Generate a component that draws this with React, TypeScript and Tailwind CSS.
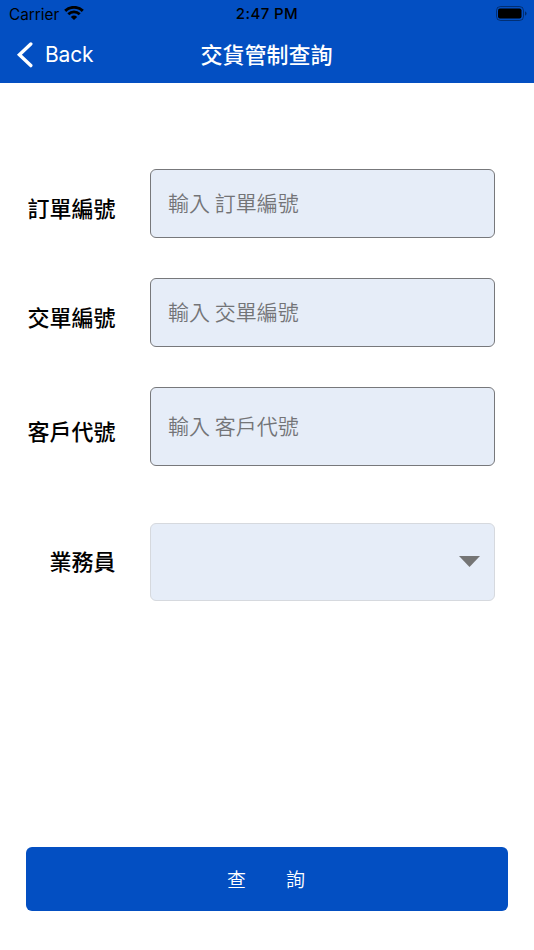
const fields = [
  { label: "訂單編號", row: "mb-10 h-[69px]", labelPos: "pt-[7px]" },
  { label: "交單編號", row: "mb-10 h-[69px]", labelPos: "pt-[7px]" },
  { label: "客戶代號", row: "mb-[57px] h-[79px]", labelPos: "pt-[7px]" },
];

const StatusBar = () => {
  return (
    <div className="flex h-7 items-center justify-between pl-[9px] pr-[7px] font-['Inter','Liberation_Sans',sans-serif] text-black">
      <div className="flex w-[120px] items-center gap-[5px]">
        <span className="pt-px text-[15.3px] leading-[27px]">Carrier</span>
        <svg width="20" height="14" viewBox="0 0 20 14" className="mb-[2px]">
          <path d="M10 14 L6.8 10.9 A4.7 4.7 0 0 1 13.2 10.9 Z" fill="black" />
          <path d="M4.3 8.3 A8.1 8.1 0 0 1 15.7 8.3" fill="none" stroke="black" strokeWidth="2.7" />
          <path d="M1.2 4.9 A12.6 12.6 0 0 1 18.8 4.9" fill="none" stroke="black" strokeWidth="2.9" />
        </svg>
      </div>
      <span className="mr-[2px] text-[15px] font-medium leading-7 tracking-[0.4px]">2:47 PM</span>
      <div className="flex w-[120px] justify-end">
        <svg width="31" height="15" viewBox="0 0 31 15" className="mb-[2px]">
          <rect x="0.5" y="0.5" width="27" height="14" rx="4" fill="none" stroke="black" strokeOpacity="0.4" />
          <rect x="2" y="2.5" width="23.5" height="10" rx="2" fill="black" />
          <path d="M29 5.3 Q30.6 6 30.6 7.5 Q30.6 9 29 9.7 Z" fill="black" fillOpacity="0.45" />
        </svg>
      </div>
    </div>
  );
};

const NavBar = () => {
  return (
    <div className="flex h-[55px] items-center justify-between px-4 pb-[2px] text-white">
      <button className="flex w-[120px] items-center gap-3">
        <svg width="17" height="26" viewBox="0 0 17 26">
          <path d="M14.8 2 L3.4 12.8 L14.8 23.6" fill="none" stroke="white" strokeWidth="3.4" strokeLinecap="round" strokeLinejoin="miter" />
        </svg>
        <span className="font-['Inter','Liberation_Sans',sans-serif] text-[21px] tracking-[-0.2px]">Back</span>
      </button>
      <h1 className="mr-px pb-[2px] text-[22px] font-medium">交貨管制查詢</h1>
      <div className="w-[120px]" />
    </div>
  );
};

export default function App() {
  return (
    <div className="flex h-[950px] w-[534px] flex-col bg-white font-['Noto_Sans_CJK_TC',sans-serif]">
      <header className="bg-[#034fc2]">
        <StatusBar />
        <NavBar />
      </header>

      {/* Query form */}
      <form className="flex grow flex-col pl-[25px] pr-[39px] pt-[86px]">
        {fields.map((field) => (
          <div key={field.label} className={`flex items-center ${field.row}`}>
            <label className={`w-[90.5px] text-right text-[22px] font-medium ${field.labelPos}`}>{field.label}</label>
            <input
              className="ml-[34.5px] h-full w-[345px] rounded-md border border-[#77787b] bg-[#e6edf8] px-[17px] pb-[3px] text-[21px] font-[350] text-black placeholder:text-[#737477] placeholder:opacity-100"
              placeholder={`輸入 ${field.label}`}
            />
          </div>
        ))}
        <div className="flex h-[78px] items-center">
          <label className="w-[90.5px] pb-[3px] text-right text-[22px] font-medium">業務員</label>
          <button type="button" className="ml-[34.5px] flex h-full w-[345px] items-center justify-end rounded-md border border-[#d6d9de] bg-[#e6edf8] pb-[2px] pr-[14px]">
            <svg width="21" height="11" viewBox="0 0 21 11">
              <path d="M0 0 H21 L10.5 11 Z" fill="#757575" />
            </svg>
          </button>
        </div>
      </form>

      <footer className="px-[26px] pb-[39px]">
        <button className="flex h-16 w-full items-center justify-center gap-10 rounded-md bg-[#034fc2] pr-[2px] text-[19px] font-[350] text-white">
          <span>查</span>
          <span>詢</span>
        </button>
      </footer>
    </div>
  );
}
